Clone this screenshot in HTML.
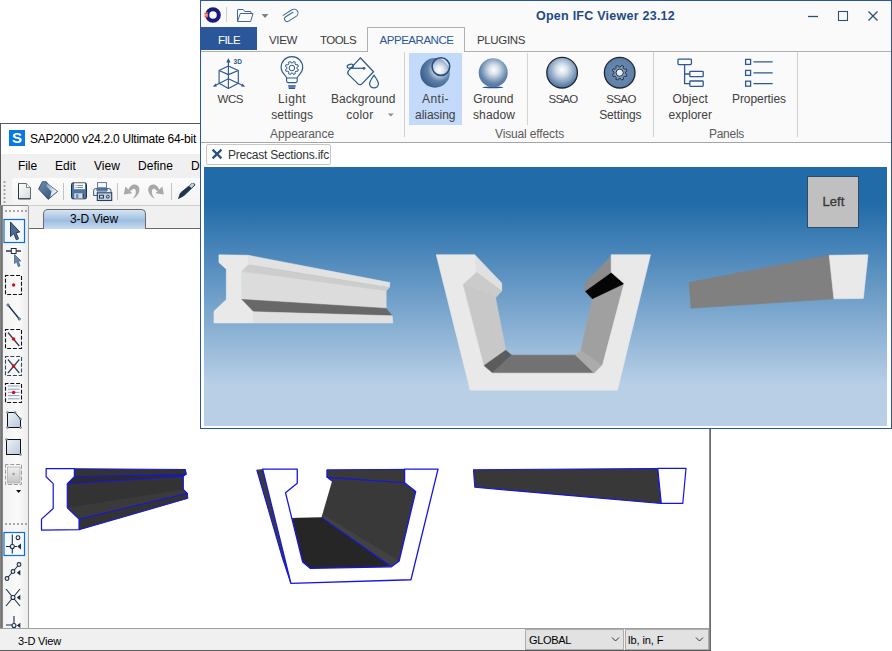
<!DOCTYPE html>
<html><head><meta charset="utf-8"><title>Open IFC Viewer / SAP2000</title>
<style>
html,body{margin:0;padding:0;}
body{width:892px;height:651px;overflow:hidden;background:#fff;position:relative;font-family:"Liberation Sans",sans-serif;font-size:12px;color:#000;}
.a{position:absolute;}
.t{position:absolute;white-space:nowrap;line-height:16px;height:16px;}
svg{position:absolute;overflow:visible;}
</style></head><body>

<!-- ================= SAP2000 window ================= -->
<div class="a" style="left:0;top:123px;width:711px;height:528px;background:#f0f0f0;"></div>
<div class="a" style="left:0;top:123px;width:711px;height:1px;background:#5a5a5a;"></div>
<div class="a" style="left:0;top:123px;width:1px;height:82px;background:#5a5a5a;"></div>
<div class="a" style="left:1px;top:124px;width:708px;height:30px;background:#fff;"></div>
<!-- S logo -->
<div class="a" style="left:9px;top:130px;width:16px;height:16px;background:#0a78e4;color:#fff;font-weight:700;font-size:15px;line-height:16px;text-align:center;">S</div>
<!-- menu bar -->
<div class="a" style="left:1px;top:154px;width:708px;height:24px;background:#f0f0f0;"></div>
<!-- toolbar -->
<div class="a" style="left:1px;top:178px;width:708px;height:27px;background:#f0f0f0;"></div>
<div class="a" style="left:12px;top:178px;width:697px;height:27px;border-radius:3px 0 0 3px;background:linear-gradient(#fcfcfc,#f3f3f3);"></div>
<div class="a" style="left:28px;top:205px;width:681px;height:1px;background:#cfcfcf;"></div>
<div class="a" style="left:0;top:205px;width:28px;height:1px;background:#8a8a8a;"></div>
<!-- left dark border -->
<div class="a" style="left:0;top:206px;width:3px;height:422px;background:linear-gradient(90deg,#8c8c8c,#6c6c6c 60%,#9a9a9a);"></div>
<!-- left toolbar -->
<div class="a" style="left:3px;top:206px;width:25px;height:422px;background:linear-gradient(90deg,#f2f2f2,#fafafa 60%,#ececec);"></div>
<div class="a" style="left:28px;top:206px;width:1px;height:422px;background:#9c9c9c;"></div>
<!-- tab strip -->
<div class="a" style="left:29px;top:206px;width:680px;height:23px;background:#f0f0f0;"></div>
<div class="a" style="left:29px;top:228px;width:680px;height:1px;background:#6a6a6a;"></div>
<div class="a" style="left:43px;top:209px;width:101px;height:19px;border:1px solid #6a6a6a;border-bottom:none;border-radius:5px 5px 0 0;background:linear-gradient(#d4e3f3 0%,#a9c5e4 45%,#9dbde0 55%,#c9dcf0 100%);"></div>
<!-- view area -->
<div class="a" style="left:29px;top:229px;width:680px;height:399px;background:#fff;"></div>
<!-- right border -->
<div class="a" style="left:709px;top:124px;width:2px;height:527px;background:linear-gradient(90deg,#9a9a9a,#5a5a5a);"></div>
<!-- status bar -->
<div class="a" style="left:0;top:628px;width:709px;height:1px;background:#a0a0a0;"></div>
<div class="a" style="left:0;top:629px;width:709px;height:21px;background:#f0f0f0;"></div>
<div class="a" style="left:0;top:650px;width:711px;height:1px;background:#5a5a5a;"></div>
<div class="a" style="left:525px;top:629px;width:99px;height:21px;background:#e2e2e2;border:1px solid #adadad;box-sizing:border-box;"></div>
<div class="a" style="left:625px;top:629px;width:84px;height:21px;background:#e2e2e2;border:1px solid #adadad;box-sizing:border-box;"></div>
<svg style="left:0;top:0" width="892" height="651" viewBox="0 0 892 651">
<defs>
<linearGradient id="pg" x1="0" y1="0" x2="1" y2="1"><stop offset="0" stop-color="#eef2f7"/><stop offset="1" stop-color="#b9c9dc"/></linearGradient>
<linearGradient id="gg" x1="0" y1="0" x2="0" y2="1"><stop offset="0" stop-color="#f0f0f0"/><stop offset="1" stop-color="#c4c4c4"/></linearGradient>
<linearGradient id="fl" x1="0" y1="0" x2="1" y2="1"><stop offset="0" stop-color="#6d8db3"/><stop offset="1" stop-color="#2e4a6e"/></linearGradient>
<linearGradient id="doc" x1="0" y1="0" x2="1" y2="1"><stop offset="0" stop-color="#ffffff"/><stop offset="1" stop-color="#cfdce0"/></linearGradient>
<linearGradient id="flap" x1="0" y1="0" x2="1" y2="0.6"><stop offset="0" stop-color="#7f9bbd"/><stop offset="1" stop-color="#ffffff"/></linearGradient>
</defs>
<!-- SAP I-beam -->
<g transform="translate(30,455) scale(0.20178)">
<polygon points="220,68 770,72 775,95 760,105 760,170 780,190 782,215 243,370 243,318 185,262 185,142 220,108" fill="#333333"/>
<polygon points="220,108 775,95 760,105 185,142" fill="#2b2b2b"/>
<polygon points="185,262 760,170 780,190 243,318" fill="#3a3a3a"/>
<g stroke="#1414e6" stroke-width="5" fill="none" stroke-linejoin="round">
<path d="M220 68 L770 72 L775 95 L760 105 L760 170 L780 190 L782 215 L243 370"/>
<path d="M220 108 L772 96 M185 142 L757 106 M243 318 L780 190"/>
<polygon points="80,68 220,68 220,108 185,142 185,262 243,318 243,370 57,372 57,318 115,265 115,142 80,108" fill="#ffffff" stroke-width="6"/>
</g>
</g>
<!-- SAP U-section -->
<g transform="translate(245,455) scale(0.23540)">
<polygon points="50,63 75,60 195,545 160,440" fill="#3a3a3a"/>
<polygon points="348,63 678,60 678,118 725,155 655,450 622,475 278,482 245,455 200,268 325,265 370,110 348,95" fill="#393939"/>
<polygon points="200,268 325,265 622,475 278,482 245,455" fill="#262626"/>
<polygon points="325,265 340,258 655,450 622,475" fill="#424242"/>
<g stroke="#1414e6" stroke-width="5" fill="none" stroke-linejoin="round">
<path d="M50 63 L160 440 L195 545 M348 95 L678 118 M325 265 L622 475 M348 63 L348 95 L370 110"/>
<polygon points="75,60 222,60 222,120 172,160 245,455 278,482 622,475 655,450 725,155 678,118 678,60 820,60 705,530 195,545" fill="#ffffff" stroke-width="5.5"/>
</g>
<g stroke="#1414e6" stroke-width="4" fill="none">
<path d="M348 63 L678 61"/>
</g>
</g>
<!-- SAP tapered beam -->
<g transform="translate(460,455) scale(0.26906)">
<polygon points="50,55 735,50 748,180 55,120" fill="#383838" stroke="#1414e6" stroke-width="4" stroke-linejoin="round"/>
<polygon points="735,50 840,50 828,180 748,180" fill="#ffffff" stroke="#1414e6" stroke-width="4.5" stroke-linejoin="round"/>
</g>

<!-- toolbar grip -->
<path d="M4.5 181 V203" stroke="#a8a8a8" stroke-width="2" stroke-dasharray="2 2" fill="none"/>
<!-- new -->
<path d="M18.5 183.5 H26.5 L30.5 187.5 V198.8 H18.5 Z" fill="url(#doc)" stroke="#6a6a6a" stroke-width="1"/>
<path d="M18.5 183.5 V198.8 H30.5" fill="none" stroke="#333" stroke-width="1"/>
<path d="M26.5 183.5 V187.5 H30.5" fill="#fff" stroke="#777" stroke-width="0.9"/>
<!-- open (folder) -->
<polygon points="38.6,189 42.3,181.7 46.2,181.7 48,184 57.5,191.4 48.2,199.4" fill="url(#fl)" stroke="#2a3f5c" stroke-width="0.8" stroke-linejoin="round"/>
<polygon points="47.2,183.4 57,191.3 50.2,197.3 51.4,191.2 46.2,186.2" fill="url(#flap)"/>
<!-- sep -->
<rect x="63" y="183" width="1" height="17" fill="#c4c4c4"/>
<!-- save -->
<rect x="71.5" y="182.9" width="15" height="15.9" rx="1.5" fill="#4d73a3" stroke="#1f2f45" stroke-width="1"/>
<rect x="74.1" y="183.2" width="10.9" height="6" fill="#f6f7f9"/>
<path d="M75.5 185.5 H76.5 M77.5 185.5 H83 M75.5 187.500 H76.500 M77.500 187.500 H83" stroke="#555" stroke-width="0.7"/>
<rect x="74.2" y="193.3" width="10" height="5.2" fill="#cfd8e3"/><rect x="76" y="194.2" width="2.4" height="3.8" fill="#6b8fbd"/><rect x="82.600" y="193.300" width="1.600" height="5.200" fill="#2c4566"/>
<!-- print -->
<rect x="97.500" y="182.600" width="9" height="7" fill="#f6f8fa" stroke="#55708f" stroke-width="0.9"/>
<rect x="98" y="187.300" width="8.500" height="3.200" fill="#4d6f99"/>
<path d="M95.5 188.600 H97 V191 H107 V188.600 H109 Q111 188.600 111 190.600 V195.500 H93.600 V190.600 Q93.600 188.600 95.500 188.600 Z" fill="#e9eff5" stroke="#3d5f8c" stroke-width="1"/>
<rect x="97.300" y="192.800" width="14.400" height="7.700" fill="#c5d3e3" stroke="#2a3f5c" stroke-width="1.100"/>
<rect x="99.500" y="195.300" width="4" height="2.800" fill="none" stroke="#2a3f5c" stroke-width="1"/><circle cx="107.800" cy="196.700" r="1.500" fill="none" stroke="#2a3f5c" stroke-width="1"/>
<rect x="117" y="183" width="1" height="17" fill="#c4c4c4"/>
<!-- undo / redo -->
<g id="undo" fill="#a8a8a8">
<path d="M128.2 191 C129 186.500 132.500 183.800 136 184.800 C139.800 186 140.500 190.500 138 194.300 C136.500 196.500 134.800 197.900 132.800 198.800 C134.800 196.300 136.300 193.800 135.800 190.800 C135.300 188.300 133 187.800 131.600 190.600 Z"/>
<polygon points="123.800,194.600 125.400,186.600 132.200,193.200"/>
</g>
<g fill="#a8a8a8" transform="translate(287.700,0) scale(-1,1)">
<path d="M128.2 191 C129 186.500 132.500 183.800 136 184.800 C139.800 186 140.500 190.500 138 194.300 C136.500 196.500 134.800 197.900 132.800 198.800 C134.800 196.300 136.300 193.800 135.800 190.800 C135.300 188.300 133 187.800 131.600 190.600 Z"/>
<polygon points="123.800,194.600 125.400,186.600 132.200,193.200"/>
</g>
<rect x="171" y="183" width="1" height="17" fill="#c4c4c4"/>
<!-- pencil -->
<path d="M178.500 198.500 L180.500 193 L192 183.500 Q194.500 182.500 195 185 L184 195.500 Z" fill="#1f3554" stroke="#16263c" stroke-width="0.8"/>
<path d="M189 186 L192.500 183.300 Q194.300 183 194.300 185 L191.500 188 Z" fill="#c7d3e0"/>

<!-- left toolbar grip -->
<path d="M5 211 H27" stroke="#a8a8a8" stroke-width="2" stroke-dasharray="2 2" fill="none"/>
<path d="M5 524 H27" stroke="#a8a8a8" stroke-width="2" stroke-dasharray="2 2" fill="none"/>
<!-- 1 pointer selected -->
<rect x="4" y="219.500" width="20.500" height="23" fill="#f3f8fd" stroke="#0a6fd8" stroke-width="1.2"/>
<path d="M10.500 222 L10.500 236.500 L13.800 233.600 L16.300 239.800 L18.600 238.800 L16.100 232.800 L19.800 232 Z" fill="#4b6c95" stroke="#1f2f45" stroke-width="0.9" stroke-linejoin="round"/>
<!-- 2 -->
<path d="M6 251 H21" stroke="#1c2c44" stroke-width="1.400"/>
<rect x="11.300" y="248.500" width="4.800" height="5" fill="#fff" stroke="#1c2c44" stroke-width="1"/>
<path d="M14.500 254.500 L14.500 263.500 L16.600 261.800 L18.300 266.600 L20 266 L18.300 261.300 L20.800 260.800 Z" fill="#6b89af" stroke="#3e5878" stroke-width="0.7"/>
<!-- 3 -->
<rect x="5.500" y="275.500" width="16" height="19" fill="none" stroke="#111" stroke-width="1.1" stroke-dasharray="4 1.8" stroke-dashoffset="1"/>
<circle cx="13.600" cy="285" r="1.700" fill="#d8101c"/>
<!-- 4 -->
<path d="M8 305 L19.300 319" stroke="#1c2c44" stroke-width="1.300"/><circle cx="8" cy="305" r="1.200" fill="#9ab" stroke="#1c2c44" stroke-width="0.500"/><circle cx="19.300" cy="319" r="1.200" fill="#9ab" stroke="#1c2c44" stroke-width="0.500"/>
<!-- 5 -->
<rect x="5.500" y="329.500" width="16" height="19" fill="none" stroke="#111" stroke-width="1.1" stroke-dasharray="4 1.8" stroke-dashoffset="1"/>
<path d="M8 332.500 L19.300 346" stroke="#2a3f5c" stroke-width="1.300"/><circle cx="13.600" cy="339" r="1.800" fill="#d8101c"/>
<!-- 6 -->
<rect x="5.500" y="356.500" width="16" height="19" fill="none" stroke="#34465e" stroke-width="1.1" stroke-dasharray="4 1.8" stroke-dashoffset="1"/>
<path d="M8 359.500 L19.300 373 M19.300 359.500 L8 373" stroke="#2a3f5c" stroke-width="1.200"/><circle cx="13.600" cy="366" r="1.800" fill="#d8101c"/>
<!-- 7 -->
<path d="M8 386 H19.500 M8 389.200 H19.500 M8 392.400 H19.500 M8 395.600 H19.500 M8 398.800 H19.500" stroke="#7f9abb" stroke-width="0.900"/>
<rect x="5.500" y="383.500" width="16" height="19" fill="none" stroke="#111" stroke-width="1.1" stroke-dasharray="4 1.8" stroke-dashoffset="1"/>
<circle cx="13.600" cy="392.500" r="1.800" fill="#d8101c"/>
<!-- 8 -->
<polygon points="7.5,412.500 15,412.500 20.500,419 20.500,427.500 7.500,427.500" fill="url(#pg)" stroke="#111" stroke-width="1"/>
<g fill="#9ab" stroke="#34506f" stroke-width="0.500"><circle cx="7.5" cy="412.500" r="1"/><circle cx="15" cy="412.500" r="1"/><circle cx="20.500" cy="419" r="1"/><circle cx="20.500" cy="427.500" r="1"/><circle cx="7.500" cy="427.500" r="1"/></g>
<!-- 9 -->
<rect x="6.500" y="439.500" width="14" height="15" fill="url(#pg)" stroke="#111" stroke-width="1"/>
<circle cx="6.500" cy="439.500" r="1" fill="#9ab" stroke="#34506f" stroke-width="0.500"/><circle cx="20.500" cy="454.500" r="1" fill="#9ab" stroke="#34506f" stroke-width="0.500"/>
<!-- 10 -->
<rect x="5.500" y="464.500" width="16" height="20" fill="none" stroke="#9a9a9a" stroke-width="1" stroke-dasharray="4 1.8" stroke-dashoffset="1"/>
<rect x="7.500" y="467" width="12.500" height="16" fill="url(#gg)" stroke="#b0b0b0" stroke-width="0.800"/><circle cx="13.600" cy="474" r="1.200" fill="#a0a0a0"/>
<polygon points="16,490 21.200,490 18.600,493" fill="#111"/>
<!-- 13 selected -->
<rect x="4" y="532.500" width="20.500" height="23" fill="#f7fafd" stroke="#0a6fd8" stroke-width="1.200"/>
<g stroke="#1c2c44" stroke-width="1.100" fill="none">
<path d="M12.300 534.500 V553.500 M6 546.500 H10.300 M14.300 546.500 H17"/>
<circle cx="12.300" cy="546.500" r="2" fill="#fff"/><circle cx="18" cy="537.700" r="1.900"/>
</g>
<polygon points="17.300,546.500 21,543.600 21,549.400" fill="#1c2c44"/>
<!-- 14 -->
<g stroke="#1c2c44" stroke-width="1.100" fill="none">
<path d="M7 578.500 L19 564.500"/>
<circle cx="19" cy="564.500" r="1.900" fill="#f5f5f5"/><circle cx="13" cy="571.500" r="1.900" fill="#f5f5f5"/><circle cx="7" cy="578.500" r="1.900" fill="#f5f5f5"/>
</g>
<polygon points="16.800,572.800 20.300,570 20.300,575.600" fill="#1c2c44"/>
<!-- 15 -->
<g stroke="#1c2c44" stroke-width="1.100" fill="none">
<path d="M6 589 L20 606 M20 589 L6 606"/><circle cx="13" cy="597.500" r="2" fill="#f5f5f5"/>
</g>
<polygon points="16.800,597.500 20.300,594.700 20.300,600.300" fill="#1c2c44"/>
<!-- 16 -->
<g stroke="#1c2c44" stroke-width="1.100" fill="none">
<path d="M14 616 V623 M6 625 H12"/><circle cx="14" cy="625.500" r="2" fill="#f5f5f5"/>
</g>
<polygon points="16.800,625.500 20.300,622.700 20.300,628" fill="#1c2c44"/>
<!-- combobox arrows -->
<path d="M612 637.500 L615.500 641 L619 637.500" stroke="#333" stroke-width="1" fill="none"/>
<path d="M696 637.500 L699.500 641 L703 637.500" stroke="#333" stroke-width="1" fill="none"/>

</svg>

<span class="t" id="st" style="left:30px;top:130.5px;font-size:12px;font-weight:400;color:#000;letter-spacing:-0.262px">SAP2000 v24.2.0 Ultimate 64-bit</span>
<span class="t" id="m1" style="left:18px;top:157.5px;font-size:12px;font-weight:400;color:#000;letter-spacing:-0.086px">File</span>
<span class="t" id="m2" style="left:55px;top:157.5px;font-size:12px;font-weight:400;color:#000;letter-spacing:0.078px">Edit</span>
<span class="t" id="m3" style="left:94px;top:157.5px;font-size:12px;font-weight:400;color:#000;letter-spacing:0.051px">View</span>
<span class="t" id="m4" style="left:138px;top:157.5px;font-size:12px;font-weight:400;color:#000;letter-spacing:0.052px">Define</span>
<span class="t" id="m5" style="left:191px;top:157.5px;font-size:12px;font-weight:400;color:#000;letter-spacing:-0.004px">Draw</span>
<span class="t" id="tv" style="left:70px;top:210.5px;font-size:12px;font-weight:400;color:#000;letter-spacing:-0.059px">3-D View</span>
<span class="t" id="sb" style="left:18px;top:632.5px;font-size:11px;font-weight:400;color:#000;letter-spacing:-0.180px">3-D View</span>
<span class="t" id="gb" style="left:529px;top:631.5px;font-size:11px;font-weight:400;color:#000;letter-spacing:-0.339px">GLOBAL</span>
<span class="t" id="un" style="left:628px;top:631.5px;font-size:11px;font-weight:400;color:#000;letter-spacing:-0.064px">lb, in, F</span>
<!-- ================= IFC window ================= -->
<div class="a" style="left:200px;top:0;width:692px;height:429px;background:#fff;border:1px solid #2b5797;box-sizing:border-box;"></div>
<div class="a" style="left:201px;top:1px;width:690px;height:141px;background:#fafafa;"></div>
<div class="a" style="left:201px;top:51px;width:690px;height:1px;background:#b0b0b0;"></div>
<div class="a" style="left:201px;top:142px;width:690px;height:1px;background:#a6a6a6;"></div>
<!-- tabs -->
<div class="a" style="left:201px;top:27px;width:56px;height:23px;background:#2b579a;"></div>
<div class="a" style="left:367px;top:27px;width:98px;height:25px;background:#fafafa;border:1px solid #b0b0b0;border-bottom:none;box-sizing:border-box;"></div>
<!-- selected button -->
<div class="a" style="left:409px;top:53px;width:53px;height:72px;background:#c3dafb;"></div>
<!-- separators -->
<div class="a" style="left:404px;top:52px;width:1px;height:85px;background:#d0d0d0;"></div>
<div class="a" style="left:527px;top:53px;width:1px;height:72px;background:#d4d4d4;"></div>
<div class="a" style="left:653px;top:52px;width:1px;height:85px;background:#d0d0d0;"></div>
<div class="a" style="left:797px;top:52px;width:1px;height:85px;background:#d0d0d0;"></div>
<!-- doc tab -->
<div class="a" style="left:206px;top:144px;width:125px;height:21px;background:#fff;border:1px solid #c6c6c6;box-sizing:border-box;border-radius:2px;"></div>
<!-- viewport -->
<div class="a" style="left:204px;top:167px;width:683px;height:259px;background:linear-gradient(#216ba9 0%,#216ba9 14%,#b8cfe6 84%,#b8cfe6 100%);"></div>
<!-- view cube -->
<div class="a" style="left:807px;top:176px;width:52px;height:52px;background:#c0c0c0;border:1px solid #34495f;box-sizing:border-box;"></div>
<svg style="left:0;top:0" width="892" height="651" viewBox="0 0 892 651">
<defs>
<radialGradient id="sph1" cx="0.64" cy="0.40" r="0.62"><stop offset="0" stop-color="#ffffff"/><stop offset="0.22" stop-color="#d9e2ec"/><stop offset="0.62" stop-color="#5f82aa"/><stop offset="1" stop-color="#3d628f"/></radialGradient>
<radialGradient id="sph2" cx="0.52" cy="0.40" r="0.58"><stop offset="0" stop-color="#ffffff"/><stop offset="0.3" stop-color="#d5dfea"/><stop offset="0.8" stop-color="#6485ac"/><stop offset="1" stop-color="#5679a3"/></radialGradient>
<radialGradient id="sph3" cx="0.5" cy="0.40" r="0.6"><stop offset="0" stop-color="#ffffff"/><stop offset="0.3" stop-color="#d5dfea"/><stop offset="0.85" stop-color="#6486ad"/><stop offset="1" stop-color="#54779f"/></radialGradient>
<radialGradient id="sph4" cx="0.5" cy="0.5" r="0.6"><stop offset="0" stop-color="#6f90b5"/><stop offset="1" stop-color="#587ba4"/></radialGradient>
</defs>
<!-- 3D I-beam -->
<g transform="translate(205,240) scale(0.22422)">
<polygon points="192,68 825,190 822,212 192,110" fill="#e2e2e2" stroke="#e2e2e2" stroke-width="2.5" stroke-linejoin="round"/>
<polygon points="192,110 822,212 808,228 162,140" fill="#cdcdcd" stroke="#cdcdcd" stroke-width="2.5" stroke-linejoin="round"/>
<polygon points="162,140 808,228 808,305 162,265" fill="#dcdcdc" stroke="#dcdcdc" stroke-width="2.5" stroke-linejoin="round"/>
<polygon points="162,265 808,305 835,338 215,320" fill="#686868" stroke="#686868" stroke-width="2.5" stroke-linejoin="round"/>
<polygon points="215,320 835,338 838,370 215,370" fill="#e0e0e0" stroke="#e0e0e0" stroke-width="2.5" stroke-linejoin="round"/>
<polygon points="62,66 192,68 192,110 162,140 162,265 215,320 215,370 40,370 40,318 95,265 95,130 62,100" fill="#e9e9e9" stroke="#e9e9e9" stroke-width="2.5" stroke-linejoin="round"/>
</g>
<!-- 3D U-section -->
<g transform="translate(425,240) scale(0.26906)">
<polygon points="185,55 285,160 285,190 190,120" fill="#e0e0e0" stroke="#e0e0e0" stroke-width="2.5" stroke-linejoin="round"/>
<polygon points="190,120 285,190 262,215 140,165" fill="#cbcbcb" stroke="#cbcbcb" stroke-width="2.5" stroke-linejoin="round"/>
<polygon points="140,165 262,215 300,410 218,468" fill="#c8c8c8" stroke="#c8c8c8" stroke-width="2.5" stroke-linejoin="round"/>
<polygon points="218,468 300,410 322,428 250,495" fill="#5c5c5c" stroke="#5c5c5c" stroke-width="2.5" stroke-linejoin="round"/>
<polygon points="250,495 322,428 560,428 630,495" fill="#727272" stroke="#727272" stroke-width="2.5" stroke-linejoin="round"/>
<polygon points="630,495 560,428 580,410 660,465" fill="#ababab" stroke="#ababab" stroke-width="2.5" stroke-linejoin="round"/>
<polygon points="660,465 580,410 622,218 740,162" fill="#a0a0a0" stroke="#a0a0a0" stroke-width="2.5" stroke-linejoin="round"/>
<polygon points="740,162 622,218 595,190 692,120" fill="#050505" stroke="#050505" stroke-width="2.5" stroke-linejoin="round"/>
<polygon points="692,120 595,190 595,160 692,60" fill="#8c8c8c" stroke="#8c8c8c" stroke-width="2.5" stroke-linejoin="round"/>
<polygon points="42,55 185,55 190,120 140,165 218,468 250,495 630,495 660,465 740,162 692,120 692,55 838,55 715,558 168,558" fill="#e9e9e9" stroke="#e9e9e9" stroke-width="2.5" stroke-linejoin="round"/>
</g>
<!-- 3D tapered beam -->
<g transform="translate(675,240) scale(0.23540)">
<polygon points="60,180 655,65 675,250 68,290" fill="#808080" stroke="#808080" stroke-width="2.5" stroke-linejoin="round"/>
<polygon points="655,65 820,63 800,248 675,250" fill="#e9e9e9" stroke="#e9e9e9" stroke-width="2.5" stroke-linejoin="round"/>
</g>

<!-- quick access: logo -->
<g>
<circle cx="213" cy="15" r="5.8" fill="none" stroke="#1b1b7e" stroke-width="4.1"/>
<rect x="203.5" y="12.6" width="4.3" height="4.6" fill="#fafafa"/>
<rect x="204.6" y="12.8" width="3.4" height="1.1" fill="#ee3a14"/><rect x="204.6" y="14.5" width="3.4" height="1.1" fill="#ee3a14"/><rect x="204.6" y="16.2" width="3.4" height="1.1" fill="#ee3a14"/>
</g>
<rect x="226" y="7" width="1" height="15" fill="#cfcfcf"/>
<!-- folder -->
<path d="M237.5 21.5 V10 Q237.5 9.5 238 9.5 H243.2 L244.8 11.5 H250.5 Q251 11.5 251 12 V13.5 M237.5 21.5 L240.3 13.5 H253 L250.6 21.5 Z" fill="none" stroke="#3f6797" stroke-width="1" stroke-linejoin="round"/>
<polygon points="261.5,14 268.5,14 265,18" fill="#808080"/>
<!-- paperclip -->
<g transform="translate(290,16) rotate(-32)" fill="none" stroke="#3f6797" stroke-width="1" stroke-linecap="round">
<path d="M4.5 -1.6 H-4 A2.6 2.6 0 0 0 -4 3.6 H5 A3.9 3.9 0 0 0 5 -4.2 H-5.5"/>
</g>
<!-- window buttons -->
<g stroke="#2b4f82" stroke-width="1.3" fill="none">
<path d="M808 16.5 H818"/>
<rect x="838.5" y="11.5" width="9" height="9" stroke-width="1.1"/>
<path d="M868.5 11.5 L877.5 20.5 M877.5 11.5 L868.5 20.5"/>
</g>
<!-- doc tab X -->
<path d="M212.6 149.6 L221.4 158.4 M221.4 149.6 L212.6 158.4" stroke="#2b4f82" stroke-width="2.2" fill="none"/>

<!-- WCS icon -->
<g fill="none" stroke="#2c598e" stroke-width="1.15" stroke-linejoin="round">
<path d="M228.4 60 V88.4"/>
<path d="M228.4 66 L238.3 70.5 V83.2 L228.4 88.4 L219.1 83.2 V70.5 Z"/>
<path d="M219.1 70.5 L228.4 74.6 L238.3 70.5"/>
<path d="M214.6 85.7 L228.4 78.8 L243.4 85.7"/>
</g>
<polygon points="228.4,58 230.5,62.4 226.3,62.4" fill="#2c598e"/>
<polygon points="212.8,86.8 215.6,83.6 216.9,86.4" fill="#2c598e"/>
<polygon points="245.2,86.8 242.4,83.6 241.1,86.4" fill="#2c598e"/>
<text x="233.6" y="64.3" font-family="Liberation Sans, sans-serif" font-size="6.5" font-weight="700" fill="#2c598e">3D</text>
<!-- Light bulb -->
<g fill="none" stroke="#2c598e" stroke-width="1.1" stroke-linejoin="round">
<path d="M286.6 78 C286.6 75.5 281.1 73.500 281.1 67.4 A10.8 10.8 0 0 1 302.7 67.4 C302.7 73.500 297.2 75.500 297.2 78"/>
<path d="M286.600 78 H297.200 V81 Q297.200 82.600 295.600 82.600 H288.200 Q286.600 82.600 286.600 81 Z"/>
<path d="M296.94 68.75 L298.40 69.63 L297.65 71.44 L296.00 71.04 L294.94 72.10 L295.34 73.75 L293.53 74.50 L292.65 73.04 L291.15 73.04 L290.27 74.50 L288.46 73.75 L288.86 72.10 L287.80 71.04 L286.15 71.44 L285.40 69.63 L286.86 68.75 L286.86 67.25 L285.40 66.37 L286.15 64.56 L287.80 64.96 L288.86 63.90 L288.46 62.25 L290.27 61.50 L291.15 62.96 L292.65 62.96 L293.53 61.50 L295.34 62.25 L294.94 63.90 L296.00 64.96 L297.65 64.56 L298.40 66.37 L296.94 67.25 Z" stroke-width="1"/>
<circle cx="291.9" cy="68" r="2.8" stroke-width="1"/>
</g>
<polygon points="288,85.200 295.800,85.200 295,89 288.800,89" fill="#2c598e"/>
<rect x="287" y="86.700" width="10" height="0.700" fill="#fafafa" opacity="0.7"/>
<!-- Paint bucket -->
<g fill="none" stroke="#2c598e" stroke-width="1.25" stroke-linejoin="round">
<path d="M360.3 57.8 L373.5 71.7 L362.2 83.6 Q360 85.6 357.8 83.6 L348.6 74.6 Q346.8 72.6 348.6 70.6 Z"/>
<ellipse cx="350.3" cy="66.2" rx="3.2" ry="1.9" transform="rotate(-12 350.3 66.2)"/>
<path d="M350 68.3 H364"/>
<path d="M374 75.2 C371.5 79 369.6 81.2 369.6 83.6 A4.4 4.4 0 0 0 378.4 83.6 C378.4 81.2 376.5 79 374 75.2 Z"/>
</g>
<circle cx="364" cy="68.3" r="1.4" fill="#2c598e"/>
<polygon points="387.8,113.4 393.8,113.4 390.8,116.6" fill="#8a8a8a"/>
<!-- Anti-aliasing -->
<circle cx="435" cy="72.9" r="14.8" fill="url(#sph1)"/>
<circle cx="440.9" cy="66.6" r="8.8" fill="#ffffff" fill-opacity="0.25" stroke="#274d80" stroke-width="1.6"/>
<!-- Ground shadow -->
<ellipse cx="492.8" cy="87.4" rx="10.5" ry="0.9" fill="#2c4f7c"/>
<circle cx="493.2" cy="72.7" r="14.5" fill="url(#sph2)"/>
<!-- SSAO -->
<circle cx="562.1" cy="72.7" r="15.3" fill="url(#sph3)" stroke="#1d2836" stroke-width="1.3"/>
<!-- SSAO settings -->
<circle cx="619.7" cy="72.7" r="15.3" fill="url(#sph4)" stroke="#1d2836" stroke-width="1.3"/>
<g fill="none" stroke="#26364a" stroke-linejoin="round">
<path d="M625.44 73.55 L627.07 74.55 L626.22 76.61 L624.36 76.16 L623.16 77.36 L623.61 79.22 L621.55 80.07 L620.55 78.44 L618.85 78.44 L617.85 80.07 L615.79 79.22 L616.24 77.36 L615.04 76.16 L613.18 76.61 L612.33 74.55 L613.96 73.55 L613.96 71.85 L612.33 70.85 L613.18 68.79 L615.04 69.24 L616.24 68.04 L615.79 66.18 L617.85 65.33 L618.85 66.96 L620.55 66.96 L621.55 65.33 L623.61 66.18 L623.16 68.04 L624.36 69.24 L626.22 68.79 L627.07 70.85 L625.44 71.85 Z" stroke-width="1" fill="#7d9bbd"/>
<circle cx="619.7" cy="72.7" r="3.6" fill="#e6ecf3" stroke-width="1"/>
</g>
<!-- Object explorer -->
<g fill="none" stroke="#2c598e" stroke-width="1.3">
<rect x="678" y="59.2" width="13.4" height="5.4" rx="0.8"/>
<rect x="689.8" y="71.3" width="13.4" height="5.4" rx="0.8"/>
<rect x="689.8" y="81" width="13.4" height="5.4" rx="0.8"/>
<path d="M684.6 64.6 V83.7 H689.8 M684.6 74 H689.8"/>
</g>
<!-- Properties -->
<g fill="none" stroke="#2c598e" stroke-width="1.3">
<rect x="745.6" y="59.4" width="5" height="5"/><rect x="745.6" y="70.4" width="5" height="5"/><rect x="745.6" y="81.2" width="5" height="5"/>
<path d="M753.4 61.9 H772.7 M753.4 72.9 H772.7 M753.4 83.7 H772.7" stroke-width="1.2"/>
</g>

</svg>

<span class="t" id="it" style="left:536px;top:7.6px;font-size:12.5px;font-weight:700;color:#1f4a86;letter-spacing:0.245px">Open IFC Viewer 23.12</span>
<span class="t" id="t1" style="left:218px;top:31.5px;font-size:11.5px;font-weight:400;color:#fff;letter-spacing:-0.574px">FILE</span>
<span class="t" id="t2" style="left:269px;top:31.5px;font-size:11.5px;font-weight:400;color:#3a3a3a;letter-spacing:-0.348px">VIEW</span>
<span class="t" id="t3" style="left:320px;top:31.5px;font-size:11.5px;font-weight:400;color:#3a3a3a;letter-spacing:-0.556px">TOOLS</span>
<span class="t" id="t4" style="left:379.5px;top:31.5px;font-size:11.5px;font-weight:400;color:#2b579a;letter-spacing:-0.461px">APPEARANCE</span>
<span class="t" id="t5" style="left:477px;top:31.5px;font-size:11.5px;font-weight:400;color:#3a3a3a;letter-spacing:-0.357px">PLUGINS</span>
<span class="t" id="r1" style="left:217.6px;top:90.5px;font-size:11.5px;font-weight:400;color:#404040;letter-spacing:-0.548px">WCS</span>
<span class="t" id="r2" style="left:278px;top:90.5px;font-size:12px;font-weight:400;color:#404040;letter-spacing:0.394px">Light</span>
<span class="t" id="r3" style="left:271.3px;top:106.5px;font-size:12px;font-weight:400;color:#404040;letter-spacing:0.043px">settings</span>
<span class="t" id="r4" style="left:331px;top:90.5px;font-size:12px;font-weight:400;color:#404040;letter-spacing:0.045px">Background</span>
<span class="t" id="r5" style="left:346.3px;top:106.5px;font-size:12px;font-weight:400;color:#404040;letter-spacing:0.237px">color</span>
<span class="t" id="r6" style="left:422px;top:90.5px;font-size:12px;font-weight:400;color:#404040;letter-spacing:0.463px">Anti-</span>
<span class="t" id="r7" style="left:415px;top:106.5px;font-size:12px;font-weight:400;color:#404040;letter-spacing:-0.025px">aliasing</span>
<span class="t" id="r8" style="left:473.3px;top:90.5px;font-size:12px;font-weight:400;color:#404040;letter-spacing:0.028px">Ground</span>
<span class="t" id="r9" style="left:473px;top:106.5px;font-size:12px;font-weight:400;color:#404040;letter-spacing:0.104px">shadow</span>
<span class="t" id="r10" style="left:548.6px;top:90.5px;font-size:11.5px;font-weight:400;color:#404040;letter-spacing:-0.817px">SSAO</span>
<span class="t" id="r11" style="left:606.3px;top:90.5px;font-size:11.5px;font-weight:400;color:#404040;letter-spacing:-0.642px">SSAO</span>
<span class="t" id="r12" style="left:599.3px;top:106.5px;font-size:12px;font-weight:400;color:#404040;letter-spacing:-0.182px">Settings</span>
<span class="t" id="r13" style="left:672.5px;top:90.5px;font-size:12px;font-weight:400;color:#404040;letter-spacing:0.135px">Object</span>
<span class="t" id="r14" style="left:668.6px;top:106.5px;font-size:12px;font-weight:400;color:#404040;letter-spacing:0.005px">explorer</span>
<span class="t" id="r15" style="left:732px;top:90.5px;font-size:12px;font-weight:400;color:#404040;letter-spacing:-0.070px">Properties</span>
<span class="t" id="g1" style="left:270px;top:125.5px;font-size:12px;font-weight:400;color:#5a5a5a;letter-spacing:-0.072px">Appearance</span>
<span class="t" id="g2" style="left:495px;top:125.5px;font-size:12px;font-weight:400;color:#5a5a5a;letter-spacing:-0.138px">Visual effects</span>
<span class="t" id="g3" style="left:709px;top:125.5px;font-size:12px;font-weight:400;color:#5a5a5a;letter-spacing:-0.284px">Panels</span>
<span class="t" id="dt" style="left:228px;top:146.5px;font-size:12px;font-weight:400;color:#333;letter-spacing:-0.219px">Precast Sections.ifc</span>
<span class="t" id="lf" style="left:822.6px;top:194.3px;font-size:13px;font-weight:400;color:#3a3a3a;-webkit-text-stroke:0.35px #3a3a3a;letter-spacing:0.003px">Left</span>
</body></html>
